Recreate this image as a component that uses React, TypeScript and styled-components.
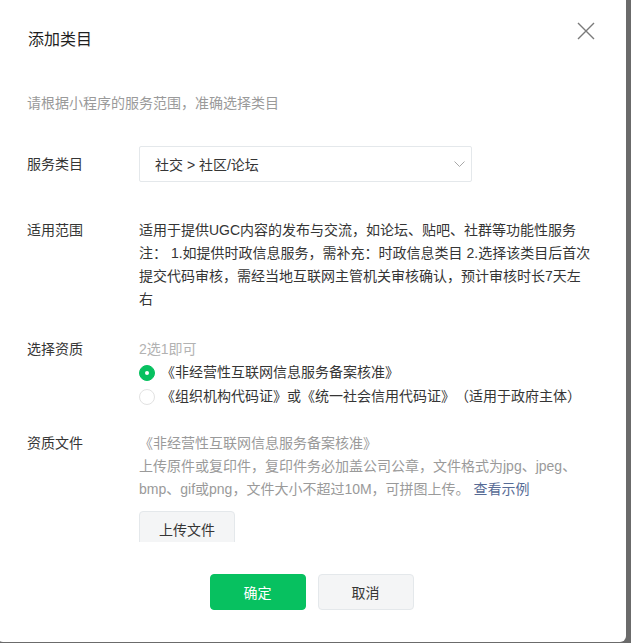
import * as React from "react";
import styled, {createGlobalStyle} from "styled-components";

const GlobalStyle = createGlobalStyle`
  html, body {
    margin: 0;
    padding: 0;
    background: #6b6b6b;
    overflow: hidden;
  }
  body {
    width: 631px;
    height: 643px;
    font-family: "Liberation Sans", "Noto Sans CJK SC", sans-serif;
    color: #353535;
    text-spacing-trim: space-all;
  }
`;

const Dialog = styled.div`
  margin-left: -3px;
  width: 629px;
  height: 642px;
  background: #fff;
  border-radius: 0 0 6px 6px;
  display: flex;
  flex-direction: column;
  overflow: hidden;
`;

const Header = styled.div`
  position: relative;
  height: 92px;
  flex: none;
  box-sizing: border-box;
  padding: 29px 0 0 31px;
`;

const Title = styled.div`
  font-size: 16px;
  line-height: 22px;
  color: #1f1f1f;
`;

const CloseButton = styled.button`
  position: absolute;
  top: 22px;
  right: 31px;
  width: 18px;
  height: 18px;
  padding: 0;
  border: none;
  background: none;
  cursor: pointer;
  display: flex;
`;

const Body = styled.div`
  height: 450px;
  flex: none;
  overflow-y: auto;
  box-sizing: border-box;
  padding: 0 0 230px 30px;
  font-size: 14px;

  &::-webkit-scrollbar {
    width: 6px;
  }
  &::-webkit-scrollbar-track {
    background: #fff;
  }
  &::-webkit-scrollbar-thumb {
    background: #c1c1c1;
  }
`;

const Tip = styled.div`
  line-height: 22px;
  color: #9a9a9a;
`;

const Row = styled.div<{ $mt: number }>`
  display: flex;
  margin-top: ${p => p.$mt}px;
`;

const Label = styled.div<{ $lh: number }>`
  width: 112px;
  flex: none;
  line-height: ${p => p.$lh}px;
`;

const Value = styled.div`
  width: 453px;
  flex: none;
  line-height: 23px;
`;

const Select = styled.div`
  width: 333px;
  height: 36px;
  box-sizing: border-box;
  border: 1px solid #e4e8eb;
  border-radius: 2px;
  display: flex;
  align-items: center;
  justify-content: space-between;
  padding: 0 6px 0 15px;
`;

const Muted = styled.div<{ $light?: boolean }>`
  color: ${p => (p.$light ? "#b2b2b2" : "#9a9a9a")};
`;

const RadioItem = styled.label`
  display: flex;
  align-items: center;
  height: 24px;
  cursor: pointer;
`;

const RadioDot = styled.span<{ $checked?: boolean }>`
  width: 16px;
  height: 16px;
  box-sizing: border-box;
  border-radius: 50%;
  margin-right: 6px;
  flex: none;
  display: flex;
  align-items: center;
  justify-content: center;
  background: ${p => (p.$checked ? "#07c160" : "#fff")};
  border: 1px solid ${p => (p.$checked ? "#07c160" : "#e2e2e2")};

  &::after {
    content: "";
    display: ${p => (p.$checked ? "block" : "none")};
    width: 4px;
    height: 4px;
    border-radius: 50%;
    background: #fff;
  }
`;

const Link = styled.a`
  color: #576b95;
  text-decoration: none;
`;

const Button = styled.button<{ $primary?: boolean }>`
  width: 96px;
  height: 36px;
  box-sizing: border-box;
  border-radius: 4px;
  font-family: inherit;
  font-size: 14px;
  cursor: pointer;
  background: ${p => (p.$primary ? "#07c160" : "#f4f5f6")};
  color: ${p => (p.$primary ? "#fff" : "#353535")};
  border: 1px solid ${p => (p.$primary ? "#07c160" : "#e4e8eb")};
`;

const UploadButton = styled(Button)`
  display: block;
  margin-top: 10px;
`;

const Footer = styled.div`
  flex: 1;
  display: flex;
  justify-content: center;
  gap: 12px;
  padding-top: 32px;
  box-sizing: border-box;
`;

const App: React.FC = () => {
  const [choice, setChoice] = React.useState(0);

  return (
    <React.Fragment>
      <GlobalStyle/>
      <Dialog>
        <Header>
          <Title>添加类目</Title>
          <CloseButton aria-label="关闭">
            <svg width="18" height="18" viewBox="0 0 18 18">
              <path d="M1 1L17 17M17 1L1 17" stroke="#7a7a7a" strokeWidth="1.4" fill="none"/>
            </svg>
          </CloseButton>
        </Header>
        <Body>
          <Tip>请根据小程序的服务范围，准确选择类目</Tip>

          <Row $mt={32}>
            <Label $lh={36}>服务类目</Label>
            <Select>
              <span>社交 &gt; 社区/论坛</span>
              <svg width="11" height="6" viewBox="0 0 11 6">
                <path d="M0.5 0.5L5.5 5.5L10.5 0.5" stroke="#a8a8a8" strokeWidth="1" fill="none"/>
              </svg>
            </Select>
          </Row>

          <Row $mt={36.5}>
            <Label $lh={23}>适用范围</Label>
            <Value>
              适用于提供UGC内容的发布与交流，如论坛、贴吧、社群等功能性服务<br/>
              注： 1.如提供时政信息服务，需补充：时政信息类目 2.选择该类目后首次提交代码审核，需经当地互联网主管机关审核确认，预计审核时长7天左右
            </Value>
          </Row>

          <Row $mt={27}>
            <Label $lh={23}>选择资质</Label>
            <Value>
              <Muted $light>2选1即可</Muted>
              <RadioItem onClick={() => setChoice(0)}>
                <RadioDot $checked={choice === 0}/>
                《非经营性互联网信息服务备案核准》
              </RadioItem>
              <RadioItem onClick={() => setChoice(1)}>
                <RadioDot $checked={choice === 1}/>
                《组织机构代码证》或《统一社会信用代码证》（适用于政府主体）
              </RadioItem>
            </Value>
          </Row>

          <Row $mt={23}>
            <Label $lh={23}>资质文件</Label>
            <Value>
              <Muted>《非经营性互联网信息服务备案核准》</Muted>
              <Muted>
                上传原件或复印件，复印件务必加盖公司公章，文件格式为jpg、jpeg、bmp、gif或png，文件大小不超过10M，可拼图上传。{" "}
                <Link href="#">查看示例</Link>
              </Muted>
              <UploadButton>上传文件</UploadButton>
            </Value>
          </Row>
        </Body>
        <Footer>
          <Button $primary>确定</Button>
          <Button>取消</Button>
        </Footer>
      </Dialog>
    </React.Fragment>
  );
};

export default App;
